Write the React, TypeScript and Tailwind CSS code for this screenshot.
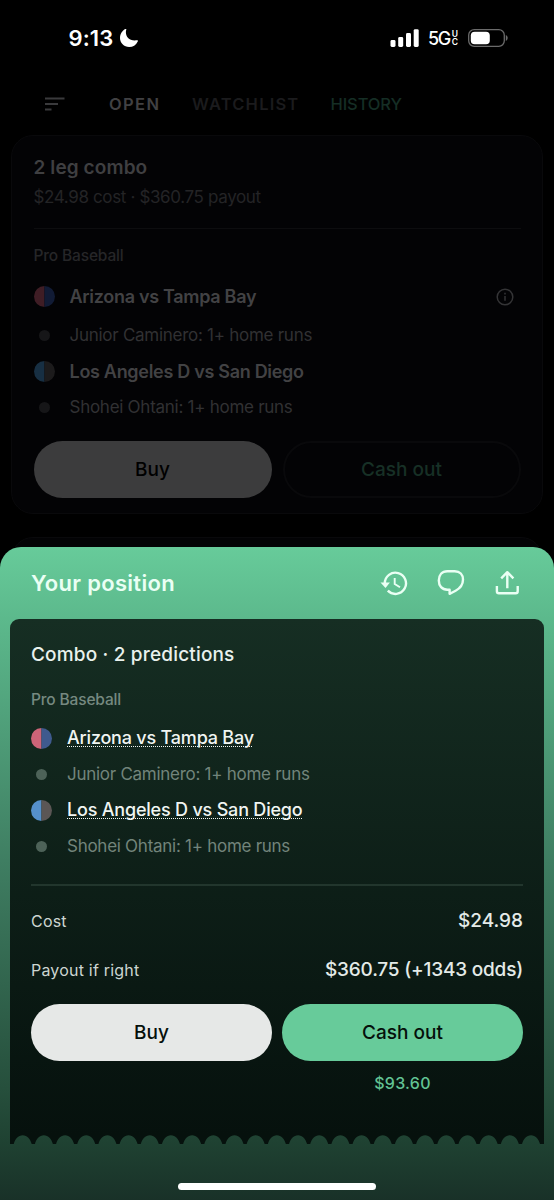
import clsx from 'clsx';

interface Leg {
  matchup: string;
  pick: string;
  left: string;
  right: string;
  dimLeft: string;
  dimRight: string;
}

const legs: Leg[] = [
  {
    matchup: 'Arizona vs Tampa Bay',
    pick: 'Junior Caminero: 1+ home runs',
    left: '#cd6478',
    right: '#3f5a8e',
    dimLeft: '#3f1d25',
    dimRight: '#111b35',
  },
  {
    matchup: 'Los Angeles D vs San Diego',
    pick: 'Shohei Ohtani: 1+ home runs',
    left: '#5590cb',
    right: '#5b5655',
    dimLeft: '#172f43',
    dimRight: '#1c1b1c',
  },
];

const TeamDot = ({ left, right }: { left: string; right: string }) => (
  <svg width="21" height="21" viewBox="0 0 21 21" className="shrink-0">
    <path d="M10.5 0a10.5 10.5 0 0 0 0 21z" fill={left} />
    <path d="M10.5 0a10.5 10.5 0 0 1 0 21z" fill={right} />
  </svg>
);

const StatusBar = () => (
  <div className="flex h-[75px] items-center justify-between pl-[68.5px] pr-[45px] text-white">
    <div className="flex items-center gap-[7px]">
      <span className="text-[22px] font-semibold leading-none tracking-[0.1px]">9:13</span>
      <svg width="18" height="18" viewBox="0 0 18 18" fill="white">
        <path d="M6.3 0.4C4.6 5.9 8 12.6 17 11.3C18.2 11.1 18.1 11.9 17.6 12.7C16 16 12.9 18 9.2 18C4 18 0 14.1 0 9.1C0 5 2.3 1.5 5.4 0.1C6 -0.2 6.5 -0.1 6.3 0.4Z" />
      </svg>
    </div>
    <div className="flex items-center">
      <svg width="30" height="18" viewBox="0 0 30 18" fill="white">
        <rect x="0.5" y="11" width="5" height="7" rx="1.4" />
        <rect x="8.2" y="8" width="5" height="10" rx="1.4" />
        <rect x="16" y="4" width="5" height="14" rx="1.4" />
        <rect x="23.7" y="0.2" width="5" height="17.8" rx="1.4" />
      </svg>
      <span className="ml-[8px] mt-[2px] text-[18px] font-medium leading-none tracking-[-1.4px]">5G</span>
      <span className="ml-[2px] mt-[1px] flex flex-col text-[8.5px] font-semibold leading-[8.5px]">
        <span>U</span>
        <span>C</span>
      </span>
      <svg width="41" height="18" viewBox="0 0 41 18" className="ml-[10px]">
        <rect x="0.7" y="0.7" width="35.6" height="16.6" rx="5.5" fill="none" stroke="#6b6b6b" strokeWidth="1.3" />
        <rect x="2.8" y="2.8" width="19" height="12.4" rx="3.8" fill="white" />
        <path d="M37.8 6v6c1-.4 1.9-1.6 1.9-3s-.9-2.6-1.9-3z" fill="#6b6b6b" />
      </svg>
    </div>
  </div>
);

const Tabs = () => (
  <div className="flex h-[60px] items-center pb-[2px] pl-[45px] text-[16.5px] leading-none">
    <svg width="20" height="14" viewBox="0 0 20 14" stroke="#3a3a3c" strokeWidth="2">
      <path d="M0 1.5h19.5M0 7.1h13M0 12.6h6.5" />
    </svg>
    <span className="ml-[44px] w-[83px] font-semibold tracking-[1.4px] text-[#414143]">OPEN</span>
    <span className="w-[138.5px] font-semibold tracking-[1.2px] text-[#1b1b1d]">WATCHLIST</span>
    <span className="font-medium tracking-[-0.1px] text-[#152e25]">HISTORY</span>
  </div>
);

const ComboCard = () => (
  <div className="mx-[11px] h-[379px] rounded-[22px] border border-[#09090b] bg-[#030305] px-[21.5px] pt-[20px]">
    <h2 className="h-[24px] text-[19px] font-semibold leading-[24px] tracking-[0.1px] text-[#3f3f41]">2 leg combo</h2>
    <p className="mt-[5px] h-[24px] text-[17px] leading-[24px] tracking-[-0.36px] text-[#242426]">$24.98 cost · $360.75 payout</p>
    <div className="mt-[19px] h-px bg-[#0d0d0f]" />
    <div className="mt-[15px] h-[24px] text-[15.5px] font-medium leading-[24px] tracking-[-0.15px] text-[#262628]">Pro Baseball</div>
    <div className="mt-[11px] flex flex-col">
      {legs.map((leg, i) => (
        <div key={leg.matchup}>
          <div className={clsx('flex items-center', i === 0 ? 'h-[37px] pb-[2px]' : 'h-[34px]')}>
            <TeamDot left={leg.dimLeft} right={leg.dimRight} />
            <span className="ml-[15px] text-[18px] font-semibold leading-none tracking-[-0.3px] text-[#424244]">{leg.matchup}</span>
            {i === 0 && (
              <svg width="18" height="18" viewBox="0 0 18 18" className="ml-auto mr-[7px]" fill="none" stroke="#343436" strokeWidth="1.5">
                <circle cx="9" cy="9" r="7.8" />
                <path d="M9 8v4.8M9 4.8v1.7" />
              </svg>
            )}
          </div>
          <div className="flex h-[38.5px] items-center">
            <span className="mx-[5px] size-[11px] shrink-0 rounded-full bg-[#161618]" />
            <span className="ml-[15px] text-[17px] leading-none tracking-[-0.27px] text-[#313133]">{leg.pick}</span>
          </div>
        </div>
      ))}
    </div>
    <div className="mt-[14px] flex justify-between text-[19px] font-medium">
      <button className="h-[57px] w-[238px] rounded-full bg-[#3c3c3d] pt-[1px] text-black">Buy</button>
      <button className="h-[57px] w-[238px] rounded-full border-2 border-[#09090b] pt-[1px] text-[#173026]">Cash out</button>
    </div>
  </div>
);

const SheetHeader = () => (
  <div className="flex h-[72px] items-center pl-[31px] pr-[34px] text-[#eafff4]">
    <h1 className="text-[22px] font-semibold leading-none tracking-[0.3px]">Your position</h1>
    <svg width="28" height="26" viewBox="0 0 28 26" className="ml-auto" fill="none" stroke="currentColor" strokeWidth="2.4">
      <path d="M4.8 13.3A10.6 10.6 0 1 1 7.8 20.7" />
      <path d="M14.7 8V14L20 17.3" strokeWidth="1.9" />
      <path d="M0.5 12.5h9.4L5.5 18z" fill="currentColor" stroke="none" />
    </svg>
    <svg width="28" height="28" viewBox="0 0 28 28" className="ml-[29px]" fill="none" stroke="currentColor" strokeWidth="2.4" strokeLinejoin="round">
      <path d="M10.3 2.2H17.7C22.9 2.2 26 5.5 26 10.6C26 15.6 22.8 19.6 18.6 21.8C16.8 22.8 14.8 23.8 12.6 24.8V20.7H10.3C5 20.7 1.8 17 1.8 11.6C1.8 6 5 2.2 10.3 2.2Z" />
    </svg>
    <svg width="25" height="26" viewBox="0 0 25 26" className="ml-[30px]" fill="none" stroke="currentColor" strokeWidth="2.4" strokeLinejoin="round">
      <path d="M1.9 16v5.2q0 2 2 2h16.8q2 0 2-2v-5.2" />
      <path d="M12.3 18.2V2.6M6.2 8.3L12.3 2.2L18.4 8.3" />
    </svg>
  </div>
);

// 25 round notches cut out of the ticket's lower edge
const notches = Array.from({ length: 25 }, (_, i) => 3.7 + i * 21.18);

const TicketEdge = () => (
  <svg width="534" height="9" viewBox="0 0 534 9" className="block">
    <path
      d={`M0 0H534V9${[...notches]
        .reverse()
        .map((x) => `H${x + 18}C${x + 16.6} 4 ${x + 13.5} 0.3 ${x + 9} 0.3S${x + 1.4} 4 ${x} 9`)
        .join('')}H0Z`}
      fill="#06110d"
    />
  </svg>
);

const Ticket = () => (
  <div className="mx-auto w-[534px]">
    <div className="h-[516px] rounded-t-[9px] bg-gradient-to-b from-[#162e23] to-[#06110d] px-[21px] pt-[24px]">
      <h2 className="h-[24px] text-[19px] font-medium leading-[24px] tracking-[0.17px] text-[#e9f1ed]">Combo · 2 predictions</h2>
      <div className="mt-[21px] h-[24px] text-[15.5px] font-medium leading-[24px] tracking-[-0.15px] text-[#768980]">Pro Baseball</div>
      <div className="mt-[8px]">
        {legs.map((leg) => (
          <div key={leg.matchup}>
            <div className="flex h-[36px] items-center">
              <TeamDot left={leg.left} right={leg.right} />
              <span className="ml-[15px] text-[18px] font-medium leading-none tracking-[-0.2px] text-[#f0f5f2] underline decoration-dotted decoration-1 underline-offset-[2px] [text-decoration-skip-ink:none]">
                {leg.matchup}
              </span>
            </div>
            <div className="flex h-[36px] items-center">
              <span className="mx-[5px] size-[11px] shrink-0 rounded-full bg-[#4d6258]" />
              <span className="ml-[15px] text-[17px] leading-none tracking-[-0.27px] text-[#72847b]">{leg.pick}</span>
            </div>
          </div>
        ))}
      </div>
      <div className="mt-[20px] h-[2px] bg-[#22362d]" />
      <div className="mt-[11px] flex h-[49px] items-center justify-between">
        <span className="pb-[2px] text-[16px] tracking-[0.2px] text-[#ccd6d1]">Cost</span>
        <span className="text-[19px] font-medium text-[#e4ebe8]">$24.98</span>
      </div>
      <div className="flex h-[49px] items-center justify-between">
        <span className="pb-[2px] text-[16px] tracking-[0.2px] text-[#ccd6d1]">Payout if right</span>
        <span className="text-[19px] font-medium tracking-[-0.2px] text-[#e4ebe8]">$360.75 (+1343 odds)</span>
      </div>
      <div className="mt-[9px] flex gap-[10px] text-[19px] font-medium text-[#05100b]">
        <button className="h-[57px] flex-1 rounded-full bg-[#e6e8e7] pt-[1px]">Buy</button>
        <button className="h-[57px] flex-1 rounded-full bg-[#67cb9a] pt-[1px]">Cash out</button>
      </div>
      <div className="ml-auto mt-[10px] w-[241px] text-center text-[16px] font-medium leading-[24px] tracking-[0.3px] text-[#62c394]">$93.60</div>
    </div>
    <TicketEdge />
  </div>
);

const App = () => {
  return (
    <div className="h-[1200px] w-[554px] overflow-hidden bg-black font-['Inter',sans-serif]">
      <div className="h-[547px] overflow-hidden">
        <StatusBar />
        <Tabs />
        <ComboCard />
        <div className="mx-[11px] mt-[23px] h-[60px] rounded-[22px] border border-[#09090b] bg-[#030305]" />
      </div>
      <div className="flex h-[653px] flex-col rounded-t-[21px] bg-[linear-gradient(to_bottom,#67cb9a_0%,#5cb98c_11%,#3f7e62_48%,#264f3c_83%,#1f4232_91%,#193128_100%)]">
        <SheetHeader />
        <Ticket />
        <div className="mx-auto mt-[39px] h-[7px] w-[198px] rounded-full bg-white" />
      </div>
    </div>
  );
};

export default App;
